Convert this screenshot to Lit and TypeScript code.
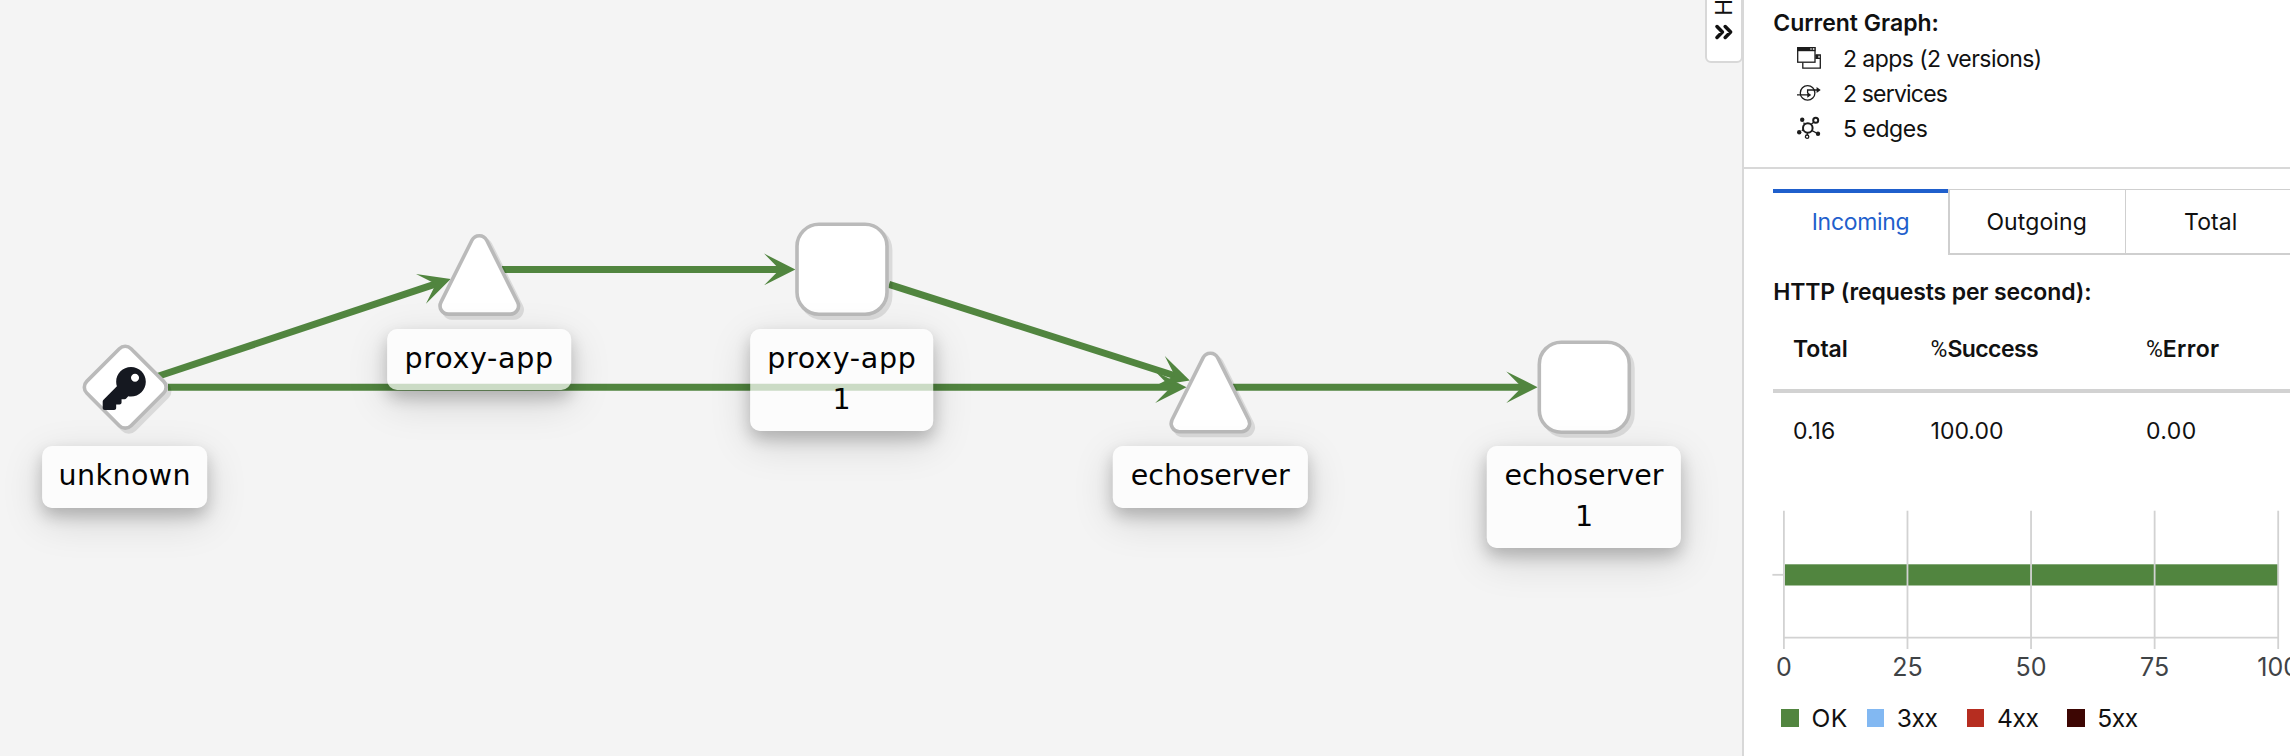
import { LitElement, html, svg, css, nothing } from "lit";
import { customElement, property } from "lit/decorators.js";
import { classMap } from "lit/directives/class-map.js";

type Point = { x: number; y: number };

const CENTERS: Record<string, Point> = {
  unknown: { x: 125.2, y: 387.2 },
  proxySvc: { x: 479.3, y: 269.8 },
  proxyApp: { x: 842, y: 269.3 },
  echoSvc: { x: 1210.4, y: 387.4 },
  echoApp: { x: 1584.3, y: 387.2 },
};

// start: where the line leaves its source; tip: where the arrow touches its target
const EDGES: { start: Point; tip: Point }[] = [
  { start: { x: 158, y: 376.3 }, tip: { x: 450.7, y: 279 } },
  { start: { x: 168, y: 387.2 }, tip: { x: 1186.5, y: 387.2 } },
  { start: { x: 502, y: 269.4 }, tip: { x: 795.4, y: 269.4 } },
  { start: { x: 889, y: 284.3 }, tip: { x: 1189.8, y: 380.5 } },
  { start: { x: 1233, y: 387.2 }, tip: { x: 1537.6, y: 387.2 } },
];

const LABELS = [
  { key: "unknown", lines: ["unknown"], x: 124.8, y: 446.2, w: 165.7 },
  { key: "proxy", lines: ["proxy-app"], x: 479.2, y: 328.8, w: 183.6 },
  { key: "proxy", lines: ["proxy-app", "1"], x: 841.9, y: 328.8, w: 183.6 },
  { key: "echo", lines: ["echoserver"], x: 1210.2, y: 446.2, w: 194.4 },
  { key: "echo", lines: ["echoserver", "1"], x: 1584, y: 446.2, w: 194.4 },
];

// polygon with every corner turned into an arc of radius r
function roundedPath(pts: Point[], r: number): string {
  const n = pts.length;
  const out: string[] = [];
  for (let i = 0; i < n; i++) {
    const p = pts[i];
    const a = pts[(i + n - 1) % n];
    const b = pts[(i + 1) % n];
    const la = Math.hypot(a.x - p.x, a.y - p.y);
    const lb = Math.hypot(b.x - p.x, b.y - p.y);
    const ua = { x: (a.x - p.x) / la, y: (a.y - p.y) / la };
    const ub = { x: (b.x - p.x) / lb, y: (b.y - p.y) / lb };
    const half = Math.acos(ua.x * ub.x + ua.y * ub.y) / 2;
    const d = r / Math.tan(half);
    out.push(
      `${i ? "L" : "M"}${(p.x + ua.x * d).toFixed(2)} ${(p.y + ua.y * d).toFixed(2)}`,
      `A${r} ${r} 0 0 1 ${(p.x + ub.x * d).toFixed(2)} ${(p.y + ub.y * d).toFixed(2)}`
    );
  }
  return out.join("") + "Z";
}

const H = 44.3;
const triangle = (c: Point) =>
  roundedPath([{ x: c.x, y: c.y - H }, { x: c.x + H, y: c.y + H }, { x: c.x - H, y: c.y + H }], 8.25);
const diamond = (c: Point) =>
  roundedPath([{ x: c.x, y: c.y - H }, { x: c.x + H, y: c.y }, { x: c.x, y: c.y + H }, { x: c.x - H, y: c.y }], 8.25);
const square = (c: Point) =>
  roundedPath(
    [{ x: c.x - 45, y: c.y - 45 }, { x: c.x + 45, y: c.y - 45 }, { x: c.x + 45, y: c.y + 45 }, { x: c.x - 45, y: c.y + 45 }],
    22
  );

const KEY_PATH =
  "M512 176.001C512 273.203 433.202 352 336 352c-11.22 0-22.19-1.062-32.827-3.069l-24.012 27.014A23.999 23.999 0 0 1 261.223 384H224v40c0 13.255-10.745 24-24 24h-40v40c0 13.255-10.745 24-24 24H24c-13.255 0-24-10.745-24-24v-78.059c0-6.365 2.529-12.47 7.029-16.971l161.802-161.802C163.108 213.814 160 195.271 160 176 160 78.798 238.797.001 335.999 0 433.488-.001 512 78.511 512 176.001zM336 128c0 26.51 21.49 48 48 48s48-21.49 48-48-21.49-48-48-48-48 21.49-48 48z";

@customElement("service-graph")
export class ServiceGraph extends LitElement {
  static styles = css`
    :host { display: block; position: relative; background: #f4f4f4; overflow: hidden; }
    svg { display: block; width: 1742px; height: 756px; }
    .line { stroke: #51853f; stroke-width: 7; }
    .head { fill: #51853f; }
    .shadow { fill: #000; stroke: #000; stroke-width: 3.6; opacity: 0.1; }
    .shape { fill: #fff; stroke: #bababa; stroke-width: 3.6; }
    .key { fill: #151820; }
    .label {
      position: absolute; transform: translateX(-50%); box-sizing: border-box;
      padding: 10.3px 0 10.5px; border-radius: 10px; text-align: center;
      background: rgba(255, 255, 255, 0.7); color: #030303;
      font: 28.5px/40.6px "DejaVu Sans", Verdana, sans-serif;
      box-shadow: 0 8px 16px rgba(0, 0, 0, 0.2), 0 12px 40px rgba(0, 0, 0, 0.15);
    }
    .label.unknown { letter-spacing: 0.45px; }
    .label.proxy { letter-spacing: 0.7px; }
  `;

  private shape(d: string) {
    return svg`
      <path class="shadow" d=${d} transform="translate(3.6 3.8)"></path>
      <path class="shape" d=${d}></path>`;
  }

  render() {
    return html`
      <svg viewBox="0 0 1742 756">
        ${EDGES.map(({ start, tip }) => {
          const angle = (Math.atan2(tip.y - start.y, tip.x - start.x) * 180) / Math.PI;
          const len = Math.hypot(tip.x - start.x, tip.y - start.y);
          return svg`
            <g transform="translate(${tip.x} ${tip.y}) rotate(${angle})">
              <line class="line" x1=${-len} y1="0" x2="-14" y2="0"></line>
              <path class="head" d="M0 0L-31.3 -15.8L-15.7 0L-31.3 15.8Z"></path>
            </g>`;
        })}
        ${this.shape(diamond(CENTERS.unknown))}
        ${this.shape(triangle(CENTERS.proxySvc))}
        ${this.shape(square(CENTERS.proxyApp))}
        ${this.shape(triangle(CENTERS.echoSvc))}
        ${this.shape(square(CENTERS.echoApp))}
        <path class="key" transform="translate(102.7 366.9) scale(0.0842)" d=${KEY_PATH}></path>
      </svg>
      ${LABELS.map(
        (l) => html`<div
          class=${classMap({ label: true, [l.key]: true })}
          style="left:${l.x}px;top:${l.y}px;width:${l.w}px"
        >${l.lines.map((t) => html`<div>${t}</div>`)}</div>`
      )}
    `;
  }
}

@customElement("traffic-chart")
export class TrafficChart extends LitElement {
  static styles = css`
    :host { display: block; }
    svg { display: block; width: 546px; height: 185px; }
    .grid { stroke: #d2d2d2; stroke-width: 1.8; }
    .bar { fill: #51853f; }
    .tick { fill: #3f4346; font: 25px Inter, sans-serif; text-anchor: middle; }
  `;

  render() {
    const x = (v: number) => 39.9 + v * 4.943;
    return html`<svg viewBox="0 0 546 185">
      <rect class="bar" x="40.8" y="64.3" width="493" height="21.2"></rect>
      ${[0, 25, 50, 75, 100].map(
        (v) => svg`
          <line class="grid" x1=${x(v)} x2=${x(v)} y1="10.7" y2="149"></line>
          <text class="tick" x=${x(v)} y="176.3">${v}</text>`
      )}
      <line class="grid" x1="39" x2="535" y1="137.7" y2="137.7"></line>
      <line class="grid" x1="28.4" x2="39.9" y1="74.8" y2="74.8"></line>
    </svg>`;
  }
}

@customElement("summary-icon")
export class SummaryIcon extends LitElement {
  @property() name = "";
  static styles = css`
    :host { display: block; }
    svg { display: block; width: 24px; height: 24px; fill: none; stroke: #1c1c1c; stroke-width: 1.3; }
    .solid { fill: #1c1c1c; stroke: none; }
    .light { fill: #fff; stroke: none; }
    .thick { stroke-width: 2; }
  `;

  render() {
    switch (this.name) {
      case "apps":
        return html`<svg viewBox="0 0 24 24">
          <path d="M5.8 16.5V22.2H23.3V9H18.5M18.5 12.4H23"></path>
          <path class="solid" d="M18.4 8.9h3v3.6h-3z"></path>
          <rect x="0.7" y="1.7" width="17.3" height="14.5"></rect>
          <path class="solid" d="M0.3 1h18.2v4.2H0.3z"></path>
          <path class="light" d="M13.4 2.3h1.2v1.5h-1.2zM15.8 2.3h1.6v1.5h-1.6z"></path>
        </svg>`;
      case "services":
        return html`<svg viewBox="0 0 24 24">
          <circle cx="10.6" cy="11.9" r="7.3"></circle>
          <path d="M0 13.9H11M10.6 12V9H20.5"></path>
          <path class="solid" d="M10.3 11L14.2 13.9L10.3 16.8zM19.6 6.1L23.7 9L19.6 11.9z"></path>
        </svg>`;
      case "edges":
        return html`<svg viewBox="0 0 24 24">
          <path d="M6.6 6.6L7.5 8M14 8.6L17 6M4.8 14.8L6.3 13.6M15 14.6L19.5 17M10.3 17V19"></path>
          <circle class="thick" cx="10.8" cy="12" r="4.8"></circle>
          <circle class="thick" cx="18.7" cy="4.2" r="2.5"></circle>
          <circle cx="10.1" cy="20.7" r="1.7"></circle>
          <circle class="solid" cx="5.2" cy="3.7" r="2.2"></circle>
          <circle class="solid" cx="2.2" cy="16.2" r="2.2"></circle>
          <circle class="solid" cx="21" cy="17.8" r="2.2"></circle>
        </svg>`;
    }
    return nothing;
  }
}

@customElement("summary-panel")
export class SummaryPanel extends LitElement {
  static styles = css`
    :host {
      display: block; box-sizing: border-box; border-left: 2px solid #d8d8d8; background: #fff; color: #111;
      font: 400 23px/35.2px Inter, sans-serif; overflow: hidden;
    }
    .overview { padding: 6.4px 0 20px 29.2px; border-bottom: 2px solid #d8d8d8; }
    .title { font-weight: 600; }
    .stat { display: flex; align-items: center; padding-left: 23.7px; white-space: pre; }
    .stat summary-icon { margin: -2.8px 22px 0 0; }
    .apps { letter-spacing: -0.55px; }
    .services { letter-spacing: -0.8px; }
    .edges { letter-spacing: -0.43px; }
    .tabs { display: flex; margin: 20px 0 0 29.2px; height: 66.2px; }
    .tab {
      box-sizing: border-box; flex: none; width: 170px; border: solid #cfcfcf; border-width: 1px 1px 2px 0;
      text-align: center; line-height: 65px; letter-spacing: 0.1px;
    }
    .tab.active {
      width: 174.8px; border-width: 4px 0 0; border-top-color: #1f5fcc;
      color: #1f5fcc; line-height: 59px; letter-spacing: -0.3px;
    }
    .tab.next { width: 178.3px; border-left-width: 2px; padding-right: 2px; }
    .http { margin: 20px 0 0 29.2px; font-weight: 600; letter-spacing: -0.12px; }
    .grid { display: grid; grid-template-columns: 137.6px 215.4px 1fr; margin-left: 29.2px; padding-left: 19.8px; }
    .head { padding-top: 21.4px; padding-bottom: 21.4px; font-weight: 600; border-bottom: 4px solid #d2d2d2; }
    .body { padding-top: 21.5px; }
    .pct { font-family: Roboto, sans-serif; font-weight: 400; letter-spacing: 0; }
    .success { letter-spacing: -0.6px; }
    .error { letter-spacing: 0.3px; }
    .zeros { letter-spacing: 0.4px; }
    traffic-chart { margin-top: 50.4px; }
    .legend { display: flex; margin: 16px 0 0 37.4px; font-size: 24.6px; letter-spacing: -0.4px; }
    .entry { display: flex; align-items: center; flex: none; width: 100.2px; gap: 12.6px; }
    .entry.ok { width: 85.2px; letter-spacing: 0.3px; }
    .swatch { width: 17.6px; height: 17.8px; }
    .ok .swatch { background: #51853f; }
    .c3 .swatch { background: #82b8f2; }
    .c4 .swatch { background: #b62d20; }
    .c5 .swatch { background: #3d0603; }
  `;

  render() {
    const stats = [
      ["apps", "2 apps (2 versions)"],
      ["services", "2 services"],
      ["edges", "5 edges"],
    ];
    const legend = [["ok", "OK"], ["c3", "3xx"], ["c4", "4xx"], ["c5", "5xx"]];
    return html`
      <div class="overview">
        <div class="title">Current Graph:</div>
        ${stats.map(
          ([k, t]) => html`<div class="stat ${k}"><summary-icon name=${k}></summary-icon><span>${t}</span></div>`
        )}
      </div>
      <div class="tabs">
        <div class="tab active">Incoming</div>
        <div class="tab next">Outgoing</div>
        <div class="tab">Total</div>
      </div>
      <div class="http">HTTP (requests per second):</div>
      <div class="grid head">
        <span>Total</span>
        <span class="success"><span class="pct">%</span>Success</span>
        <span class="error"><span class="pct">%</span>Error</span>
      </div>
      <div class="grid body"><span>0.16</span><span>100.00</span><span class="zeros">0.00</span></div>
      <traffic-chart></traffic-chart>
      <div class="legend">
        ${legend.map(([k, t]) => html`<div class="entry ${k}"><span class="swatch"></span><span>${t}</span></div>`)}
      </div>
    `;
  }
}

@customElement("app-root")
export class AppRoot extends LitElement {
  static styles = css`
    :host {
      display: grid; grid-template-columns: 1742px 1fr; position: relative;
      width: 2290px; height: 756px; overflow: hidden; background: #fff;
    }
    .toggle {
      position: absolute; left: 1705px; top: -6px; width: 38px; height: 68.5px; box-sizing: border-box;
      border: 2px solid #d8d8d8; border-radius: 6px; background: #fff;
      display: flex; flex-direction: column; align-items: center; padding-top: 3px; gap: 8px;
    }
    .word {
      writing-mode: vertical-rl; transform: rotate(180deg); color: #111;
      font: 22.5px/22px Inter, sans-serif;
    }
    .chevrons { width: 20px; height: 16px; }
    .chevrons path { fill: none; stroke: #111; stroke-width: 3.6; stroke-linejoin: round; stroke-linecap: round; }
  `;

  render() {
    return html`
      <service-graph></service-graph>
      <summary-panel></summary-panel>
      <div class="toggle">
        <span class="word">H</span>
        <svg class="chevrons" viewBox="0 0 20 16"><path d="M3 2.6L8.4 8L3 13.4M11.2 2.6L16.6 8L11.2 13.4"></path></svg>
      </div>
    `;
  }
}
